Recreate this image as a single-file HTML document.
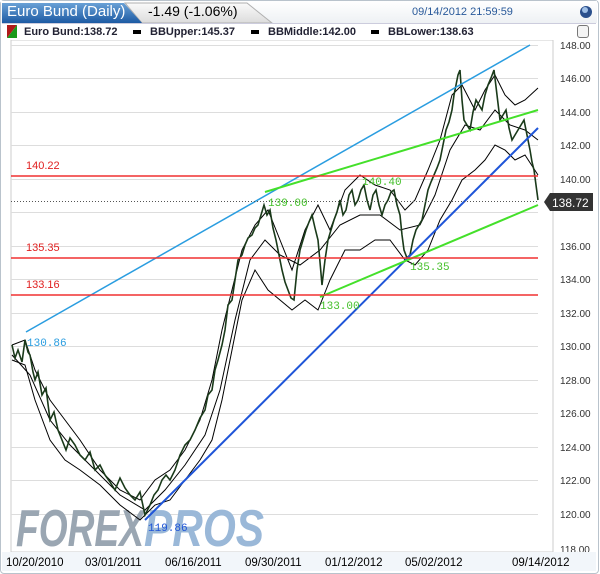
<!DOCTYPE html>
<html><head><meta charset="utf-8"><style>
body{margin:0;width:600px;height:574px;background:#fff;font-family:"Liberation Sans",sans-serif;position:relative;overflow:hidden}
.a{position:absolute}
</style></head><body>
<div class="a" style="left:0;top:0;width:597px;height:572px;border:1px solid #b9c3cc;border-radius:4px;background:#fff"></div>
<div class="a" style="left:1px;top:1px;width:596px;height:22px;background:linear-gradient(#fff,#eef1f4)"></div>
<svg class="a" style="left:0;top:0" width="600" height="24">
<defs><linearGradient id="g1" x1="0" y1="0" x2="0" y2="1"><stop offset="0" stop-color="#6aa1d6"/><stop offset="1" stop-color="#1c5aa3"/></linearGradient>
<linearGradient id="g2" x1="0" y1="0" x2="0" y2="1"><stop offset="0" stop-color="#fafafa"/><stop offset="1" stop-color="#dcdcdc"/></linearGradient></defs>
<path d="M125 3 L247 3 L272 23 L142 23 Z" fill="url(#g2)" stroke="#b0b0b0"/>
<path d="M2 3 L124 3 L142 23 L2 23 Z" fill="url(#g1)"/>
<circle cx="586" cy="12" r="6" fill="#2a4f8c"/><circle cx="585" cy="10" r="3" fill="#9fbfe6"/>
</svg>
<div class="a" style="left:7px;top:3px;color:#fff;font-size:15px">Euro Bund (Daily)</div>
<div class="a" style="left:148px;top:3px;color:#000;font-size:14px">-1.49 (-1.06%)</div>
<div class="a" style="left:412px;top:6px;color:#2a5a9a;font-size:11px">09/14/2012 21:59:59</div>
<div class="a" style="left:2px;top:23px;width:594px;height:20px;background:#fff;border-top:1px solid #ccd"></div>
<svg class="a" style="left:7px;top:25px" width="10" height="13"><polygon points="0,0 10,0 0,13" fill="#b01a1a"/><polygon points="10,0 10,13 0,13" fill="#1a9a1a"/></svg>
<div class="a" style="left:24px;top:26px;font-size:11px;font-weight:bold;color:#223">Euro Bund:138.72</div>
<div class="a" style="left:133px;top:30px;width:8px;height:4px;background:#000"></div>
<div class="a" style="left:150px;top:26px;font-size:11px;font-weight:bold;color:#223">BBUpper:145.37</div>
<div class="a" style="left:251px;top:30px;width:8px;height:4px;background:#000"></div>
<div class="a" style="left:268px;top:26px;font-size:11px;font-weight:bold;color:#223">BBMiddle:142.00</div>
<div class="a" style="left:371px;top:30px;width:8px;height:4px;background:#000"></div>
<div class="a" style="left:388px;top:26px;font-size:11px;font-weight:bold;color:#223">BBLower:138.63</div>
<div class="a" style="left:577px;top:25px;width:10px;height:11px;border:1px solid #777;border-radius:3px;background:#f4f4f4"></div>
<svg class="a" style="left:0;top:40px" width="600" height="534">
<g transform="translate(0,-40)">
<rect x="11" y="40" width="542" height="512" fill="#fff" stroke="#ccc"/>
<g stroke="#ddd" stroke-width="1">
<line x1="11" x2="538" y1="45.5" y2="45.5"/><line x1="11" x2="538" y1="78.5" y2="78.5"/><line x1="11" x2="538" y1="112.5" y2="112.5"/><line x1="11" x2="538" y1="145.5" y2="145.5"/><line x1="11" x2="538" y1="179.5" y2="179.5"/><line x1="11" x2="538" y1="212.5" y2="212.5"/><line x1="11" x2="538" y1="246.5" y2="246.5"/><line x1="11" x2="538" y1="279.5" y2="279.5"/><line x1="11" x2="538" y1="313.5" y2="313.5"/><line x1="11" x2="538" y1="346.5" y2="346.5"/><line x1="11" x2="538" y1="380.5" y2="380.5"/><line x1="11" x2="538" y1="413.5" y2="413.5"/><line x1="11" x2="538" y1="447.5" y2="447.5"/><line x1="11" x2="538" y1="480.5" y2="480.5"/><line x1="11" x2="538" y1="514.5" y2="514.5"/>
</g>
<text x="16" y="546" font-family="Liberation Sans" font-weight="bold" font-style="italic" font-size="52" fill="#9aa6b2" textLength="128" lengthAdjust="spacingAndGlyphs">FOREX</text>
<text x="144" y="546" font-family="Liberation Sans" font-weight="bold" font-style="italic" font-size="52" fill="#9ab8d8" textLength="120" lengthAdjust="spacingAndGlyphs">PROS</text>
<g fill="none" stroke="#000" stroke-width="1">
<polyline points="12,345 25,340 35,370 50,400 65,420 80,440 100,470 120,490 140,500 155,480 170,470 185,450 200,420 212,380 222,330 232,290 242,250 255,225 268,210 280,240 292,270 305,230 318,205 330,230 345,190 360,175 375,185 390,190 405,210 415,200 428,170 440,140 452,95 462,85 475,110 485,90 495,75 505,95 515,105 525,100 538,88"/>
<polyline points="12,360 25,365 35,400 50,440 65,460 80,470 100,485 120,505 140,520 155,505 170,500 185,480 200,460 212,440 222,400 232,350 242,300 255,270 268,290 280,300 292,310 305,300 318,310 330,280 345,250 360,250 375,240 390,240 405,260 415,265 428,250 440,220 452,200 462,180 475,170 485,160 495,145 505,150 515,160 525,155 538,175"/>
<polyline points="12,355 30,375 50,420 70,445 95,470 120,495 145,510 165,490 185,465 205,435 220,390 235,320 250,260 265,240 280,255 300,265 320,250 340,225 360,215 380,215 400,230 420,225 435,195 450,150 465,125 480,130 495,110 510,125 525,130 538,140"/>
</g>
<g stroke="#1a3a1a" stroke-width="1.6" fill="none">
<polyline points="12,345 15,358 18,350 22,362 25,340 28,352 30,355 33,372 35,380 38,372 42,395 46,388 50,420 54,412 58,430 62,440 66,450 70,438 75,445 80,455 85,460 90,452 95,470 100,465 105,475 110,482 115,490 120,478 125,488 130,495 135,500 140,492 145,515 150,505 154,495 158,490 162,480 166,475 170,480 175,470 180,455 185,445 190,440 195,430 200,418 205,410 208,395 212,390 215,370 218,360 222,345 225,330 228,305 232,300 235,280 238,260 242,255 245,245 248,238 252,235 255,228 258,225 261,215 264,205 267,215 270,210 273,228 276,240 279,255 282,270 285,282 288,290 291,298 294,300 297,270 300,250 303,240 306,230 309,222 312,215 315,228 318,240 320,262 322,285 325,260 328,240 331,230 334,220 337,212 340,200 343,215 346,210 349,195 352,190 355,205 358,200 361,190 364,185 367,200 370,210 373,195 376,190 379,205 382,215 385,205 388,200 391,192 394,190 397,205 400,215 402,235 404,250 407,258 410,255 413,240 416,230 419,225 422,220 425,205 428,190 431,182 434,175 437,168 440,160 443,145 446,130 449,122 452,110 454,95 456,85 458,75 460,70 462,100 464,120 467,125 470,130 473,112 476,100 479,105 482,110 485,95 488,85 491,78 494,70 497,95 500,120 503,115 506,110 509,128 512,140 515,135 518,130 521,125 524,120 527,135 530,150 532,162 534,170 536,185 538,200"/>
</g>
<line x1="26" y1="332" x2="530" y2="45" stroke="#2a9de0" stroke-width="1.5"/>
<line x1="145" y1="520" x2="538" y2="128" stroke="#1f55d8" stroke-width="2"/>
<line x1="265" y1="192" x2="538" y2="110" stroke="#44e02a" stroke-width="2"/>
<line x1="320" y1="297" x2="538" y2="205" stroke="#44e02a" stroke-width="2"/>
<g stroke="#f03030" stroke-width="1.5"><line x1="11" x2="538" y1="176" y2="176"/><line x1="11" x2="538" y1="258" y2="258"/><line x1="11" x2="538" y1="295" y2="295"/></g>
<line x1="11" x2="538" y1="201.5" y2="201.5" stroke="#555" stroke-dasharray="1,2"/>
<g font-family="Liberation Sans" font-size="11" fill="#e02020"><text x="26" y="169">140.22</text><text x="26" y="251">135.35</text><text x="26" y="288">133.16</text></g>
<g font-family="Liberation Mono" font-size="11"><text x="27" y="346" fill="#2a9de0">130.86</text><text x="148" y="531" fill="#1f55d8">119.86</text><text x="320" y="309" fill="#44c02a">133.00</text><text x="410" y="270" fill="#44c02a">135.35</text><text x="362" y="185" fill="#44c02a">140.40</text><text x="268" y="206" fill="#44c02a">139.00</text></g>
<line x1="553" y1="40" x2="553" y2="552" stroke="#ccc"/>
<g font-family="Liberation Sans" font-size="10" fill="#333">
<text x="560" y="49">148.00</text><text x="560" y="82">146.00</text><text x="560" y="116">144.00</text><text x="560" y="149">142.00</text><text x="560" y="183">140.00</text><text x="560" y="250">136.00</text><text x="560" y="283">134.00</text><text x="560" y="317">132.00</text><text x="560" y="350">130.00</text><text x="560" y="384">128.00</text><text x="560" y="417">126.00</text><text x="560" y="451">124.00</text><text x="560" y="484">122.00</text><text x="560" y="518">120.00</text><text x="560" y="553">118.00</text>
</g>
<path d="M544 202 L550 193 L593 193 L593 211 L550 211 Z" fill="#333"/>
<text x="552" y="207" font-family="Liberation Sans" font-size="12" fill="#fff">138.72</text>
<rect x="2" y="552" width="594" height="19" fill="#f2f6fa"/>
<g font-family="Liberation Sans" font-size="11.5" fill="#000">
<text x="6" y="566">10/20/2010</text><text x="85" y="566">03/01/2011</text><text x="165" y="566">06/16/2011</text><text x="245" y="566">09/30/2011</text><text x="325" y="566">01/12/2012</text><text x="405" y="566">05/02/2012</text><text x="512" y="566">09/14/2012</text>
</g>
</g></svg>
</body></html>
